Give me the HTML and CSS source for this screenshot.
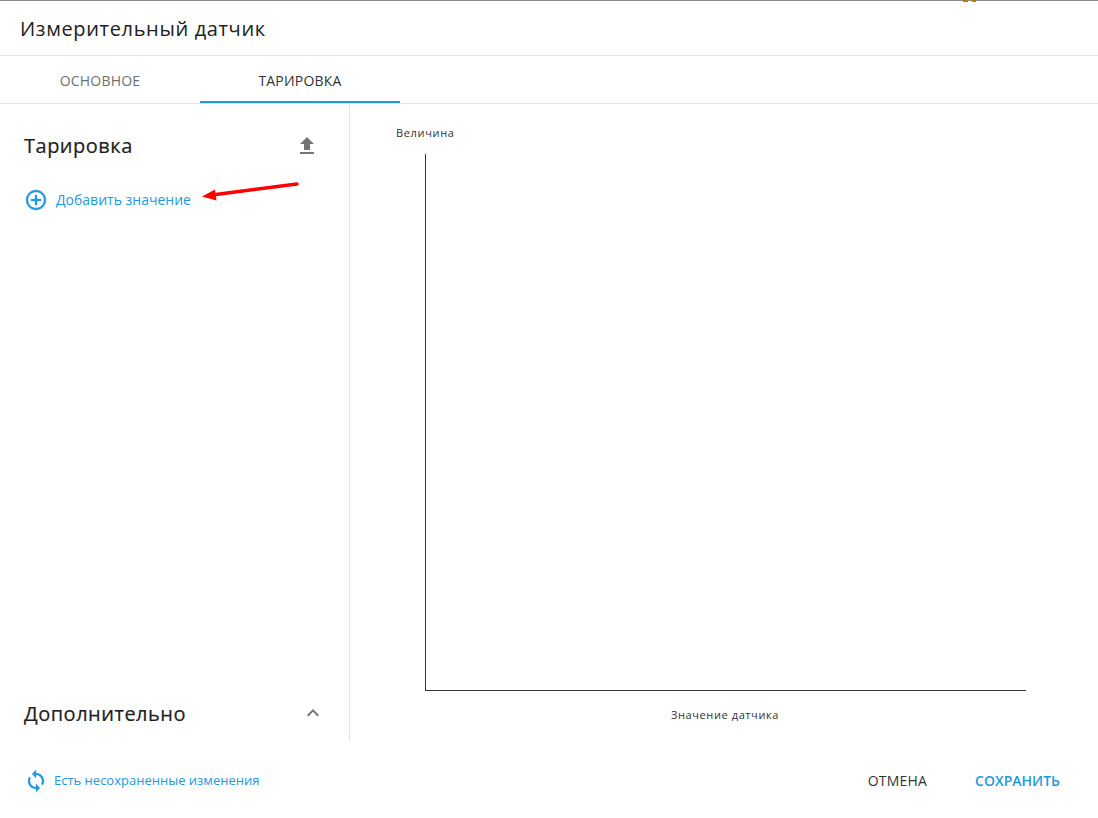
FILE: index.html
```html
<!DOCTYPE html>
<html lang="ru">
<head>
<meta charset="utf-8">
<title>Измерительный датчик</title>
<link rel="stylesheet" href="styles.css">
</head>
<body>
<div class="dialog">
  <span class="peek"></span>
  <header class="title-bar">Измерительный датчик</header>
  <nav class="tabs">
    <div class="tab">ОСНОВНОЕ</div>
    <div class="tab active">ТАРИРОВКА</div>
  </nav>
  <main class="content">
    <aside class="side">
      <div class="side-head">
        <h2 class="side-title">Тарировка</h2>
        <svg class="upload" viewBox="0 0 24 24" width="24" height="24"><path fill="#757575" d="M9 16h6v-6h4l-7-7-7 7h4v6zm-4 2h14v2H5v-2z"/></svg>
      </div>
      <div class="add-row">
        <svg class="add-icon" viewBox="0 0 24 24" width="24" height="24"><path fill="#2299dd" stroke="#2299dd" stroke-width="0.300" d="M13 7h-2v4H7v2h4v4h2v-4h4v-2h-4V7zm-1-5C6.480 2 2 6.480 2 12s4.480 10 10 10 10-4.480 10-10S17.520 2 12 2zm0 18c-4.410 0-8-3.590-8-8s3.590-8 8-8 8 3.590 8 8-3.590 8-8 8z"/></svg>
        <span class="add-text">Добавить значение</span>
      </div>
      <div class="side-foot">
        <h2 class="side-title">Дополнительно</h2>
        <svg class="chevron" viewBox="0 0 24 24" width="24" height="24"><path fill="#757575" d="M12 8l-6 6 1.410 1.410L12 10.830l4.590 4.580L18 14z"/></svg>
      </div>
    </aside>
    <section class="chart">
      <div class="y-label">Величина</div>
      <div class="plot"></div>
      <div class="x-label">Значение датчика</div>
    </section>
    <svg class="arrow" viewBox="0 0 110 30" width="110" height="30"><path fill="none" stroke="#ff0000" stroke-width="3.500" stroke-linecap="round" d="M103 3 L18 14"/><path fill="#ff0000" d="M8 15.500 L21 8.500 L22.500 19.500 Z"/></svg>
  </main>
  <footer class="footer">
    <div class="status">
      <svg class="sync" viewBox="0 0 24 24" width="24" height="24"><path fill="#2299dd" stroke="#2299dd" stroke-width="0.300" d="M12 4V1L8 5l4 4V6c3.310 0 6 2.690 6 6 0 1.010-.25 1.970-.7 2.800l1.460 1.460C19.540 15.030 20 13.570 20 12c0-4.420-3.580-8-8-8zm0 14c-3.310 0-6-2.690-6-6 0-1.010.25-1.970.7-2.800L5.240 7.740C4.460 8.970 4 10.430 4 12c0 4.420 3.580 8 8 8v3l4-4-4-4v3z"/></svg>
      <span class="status-text">Есть несохраненные изменения</span>
    </div>
    <div class="actions">
      <span class="btn">ОТМЕНА</span>
      <span class="btn primary">СОХРАНИТЬ</span>
    </div>
  </footer>
</div>
</body>
</html>
```
FILE: styles.css
```css
html, body {
  margin: 0;
  padding: 0;
  background: #fff;
}
body {
  font-family: "Open Sans", "Noto Sans", sans-serif;
  color: #212121;
  width: 1098px;
  height: 818px;
  overflow: hidden;
}
.dialog {
  position: relative;
  display: flex;
  flex-direction: column;
  height: 818px;
  border-top: 1px solid #8a8a8a;
  box-sizing: border-box;
}
.peek {
  position: absolute;
  left: 963px;
  top: -1px;
  width: 13px;
  height: 2px;
  background: linear-gradient(to right, #b9770e 0 5px, transparent 5px 9px, #b9770e 9px 13px);
}
.title-bar {
  height: 55px;
  box-sizing: border-box;
  padding-left: 20px;
  line-height: 55px;
  font-size: 20px;
  letter-spacing: 0.65px;
  border-bottom: 1px solid #e3e3e3;
  flex: none;
}
.tabs {
  display: flex;
  height: 48px;
  box-sizing: border-box;
  border-bottom: 1px solid #e3e3e3;
  flex: none;
}
.tab {
  width: 200px;
  height: 47px;
  box-sizing: border-box;
  text-align: center;
  line-height: 50px;
  font-size: 14px;
  font-weight: 400;
  letter-spacing: 0.2px;
  color: #6f6f6f;
}
.tab.active {
  color: #333;
  border-bottom: 2px solid #2299dd;
}
.content {
  position: relative;
  display: flex;
  height: 637px;
  flex: none;
}
.side {
  width: 350px;
  box-sizing: border-box;
  border-right: 1px solid #e3e3e3;
  display: flex;
  flex-direction: column;
  padding: 25px 22px 0 24px;
  flex: none;
}
.side-head {
  display: flex;
  justify-content: space-between;
  align-items: center;
  height: 32px;
}
.side-title {
  margin: 0;
  font-size: 20px;
  font-weight: 400;
  letter-spacing: 0.5px;
  -webkit-text-stroke: 0.2px #212121;
}
.upload {
  flex: none;
  margin: 2px 8px 0 0;
}
.add-row {
  display: flex;
  align-items: center;
  margin-top: 26px;
  height: 24px;
}
.add-icon {
  margin-top: 1px;
}
.add-text {
  margin-left: 8px;
  font-size: 14px;
  color: #2299dd;
}
.side-foot {
  margin-top: auto;
  margin-bottom: 12px;
  display: flex;
  justify-content: space-between;
  align-items: center;
  height: 32px;
}
.chevron {
  flex: none;
  margin: 0 2px 0 0;
}
.chart {
  flex: 1;
  position: relative;
  padding: 21px 0 0 46px;
}
.y-label {
  font-size: 11px;
  line-height: 16px;
  letter-spacing: 0.65px;
  color: #333;
}
.plot {
  margin: 13px 0 0 29px;
  width: 601px;
  height: 537px;
  box-sizing: border-box;
  border-left: 1px solid #333;
  border-bottom: 1px solid #333;
}
.x-label {
  margin: 16px 0 0 29px;
  width: 600px;
  text-align: center;
  font-size: 11px;
  line-height: 16px;
  letter-spacing: 0.6px;
  color: #333;
}
.arrow {
  position: absolute;
  left: 194px;
  top: 77px;
}
.footer {
  flex: 1;
  display: flex;
  justify-content: space-between;
  align-items: center;
  padding: 1px 38px 0 24px;
}
.status {
  display: flex;
  align-items: center;
}
.sync {
  margin-top: 1px;
}
.status-text {
  margin-left: 6px;
  font-size: 13px;
  color: #2299dd;
}
.actions {
  display: flex;
  gap: 48px;
}
.btn {
  font-size: 14px;
  letter-spacing: 0.2px;
  color: #333;
}
.btn.primary {
  color: #2299dd;
  font-weight: 600;
  letter-spacing: 0;
}
```
